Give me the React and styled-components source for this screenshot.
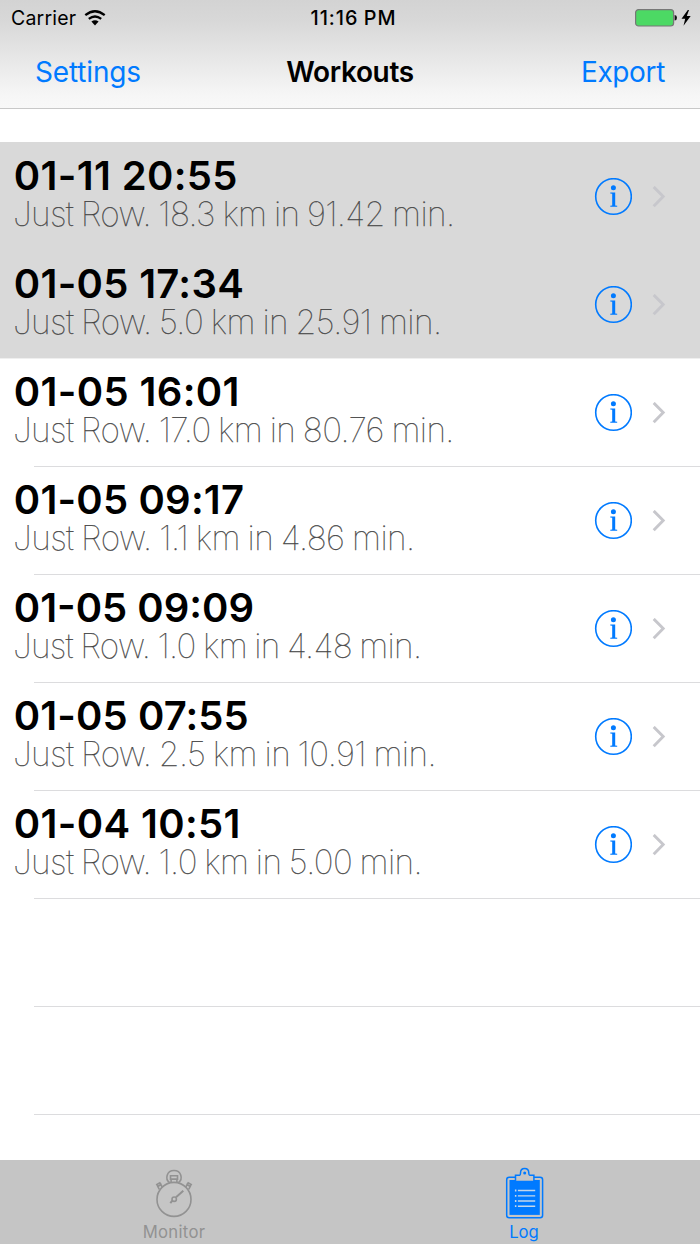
import React from "react";
import styled, { createGlobalStyle } from "styled-components";

const GlobalStyle = createGlobalStyle`
  * { box-sizing: border-box; }
  body { margin: 0; background: #fff; font-family: Inter, "Liberation Sans", sans-serif; color: #000; }
  svg { flex: none; }
`;

const Screen = styled.div`
  width: 700px;
  height: 1244px;
  display: flex;
  flex-direction: column;
  overflow: hidden;
`;

const Header = styled.header`
  height: 109px;
  flex: none;
  background: linear-gradient(#d3d3d3 0%, #d8d8d8 20%, #f6f6f6 88%, #f8f8f8 100%);
  border-bottom: 1px solid #c8c8c8;
`;

const StatusBar = styled.div`
  height: 36px;
  padding: 0 9px 0 11px;
  display: grid;
  grid-template-columns: 1fr auto 1fr;
  align-items: center;
  font-size: 19.5px;
  line-height: 36px;
`;

const StatusGroup = styled.div`
  display: flex;
  align-items: center;
  justify-content: ${(p) => (p.$end ? "flex-end" : "flex-start")};
  gap: ${(p) => (p.$end ? 4 : 8)}px;
  letter-spacing: 0.2px;
`;

const Clock = styled.time`
  font-weight: 500;
  font-size: 19.8px;
  letter-spacing: 1px;
  word-spacing: -1px;
  padding-left: 5px;
`;

const NavBar = styled.nav`
  height: 72px;
  padding: 0 35px;
  display: grid;
  grid-template-columns: 1fr auto 1fr;
  line-height: 72px;
  font-size: 28px;
`;

const NavAction = styled.a`
  color: #007aff;
  letter-spacing: ${(p) => p.$spacing}px;
  text-align: ${(p) => p.$align};
`;

const NavTitle = styled.h1`
  margin: 0;
  font-size: 28px;
  font-weight: 600;
  letter-spacing: -0.35px;
`;

const List = styled.ul`
  list-style: none;
  flex: 1;
  min-height: 0;
  overflow: hidden;
  margin: 0;
  padding: 33px 0 0;
`;

const Row = styled.li`
  height: 108.06px;
  display: flex;
  background: ${(p) => (p.$selected ? "#d9d9d9" : "#fff")};
  padding-left: ${(p) => (p.$inset ? 34 : 0)}px;
`;

const RowBody = styled.div`
  flex: 1;
  display: flex;
  align-items: center;
  padding-right: 34px;
  border-top: 1px solid ${(p) => (p.$selected ? "transparent" : p.$soft ? "#efefef" : "#dcdcde")};
`;

const RowText = styled.div`
  flex: 1;
  white-space: nowrap;
  align-self: flex-start;
  padding-top: 11px;
  margin-left: ${(p) => (p.$inset ? -21 : 13)}px;
`;

const RowTitle = styled.div`
  padding-left: 0.8px;
  font-size: 40px;
  font-weight: 600;
  line-height: 44px;
  letter-spacing: ${(p) => p.$spacing}px;
`;

const RowDetail = styled.div`
  font-size: 33.5px;
  font-weight: 100;
  line-height: 32px;
  color: #444;
  -webkit-text-stroke: 0.25px #444;
  letter-spacing: ${(p) => p.$spacing}px;
  word-spacing: -1.3px;
`;

const InfoIcon = styled.svg`
  width: 38px;
  height: 38px;
  margin-right: 20px;
`;

const TabBar = styled.footer`
  height: 84px;
  flex: none;
  display: flex;
  background: #c5c5c5;
`;

const Tab = styled.div`
  flex: 1;
  display: flex;
  flex-direction: column;
  align-items: center;
  padding: 7px 2px 0 0;
  color: ${(p) => (p.$active ? "#007aff" : "#929292")};
  font-size: 16.7px;
  line-height: 25px;
  letter-spacing: ${(p) => (p.$active ? 0 : 0.3)}px;
`;

const Wifi = () => (
  <svg width="22" height="16" viewBox="0 0 22 16" fill="none" stroke="#000" strokeWidth="2.3">
    <path d="M1.3 5.2Q11 -2.7 20.7 5.2M4.8 8.9Q11 4.1 17.2 8.9" />
    <path d="M7.4 11.5Q11 8.9 14.6 11.5L11 15.5Z" fill="#000" stroke="none" />
  </svg>
);

const Battery = () => (
  <svg width="42" height="18" viewBox="0 0 42 18">
    <rect x="0.6" y="0.6" width="38" height="16.4" rx="3" fill="#4cd964" stroke="#777" strokeWidth="1.2" />
    <path d="M39.6 6Q42 6.2 42 8.8T39.6 11.6Z" fill="#111" />
  </svg>
);

const Bolt = () => (
  <svg width="10" height="16" viewBox="0 0 10 16">
    <path d="M6.8 0L0.5 8.7H4.2L2.5 15.7L9.7 6.1H5.8L8 0Z" />
  </svg>
);

const Info = () => (
  <InfoIcon viewBox="0 0 38 38" fill="#007aff">
    <circle cx="19.5" cy="18.5" r="17.8" fill="none" stroke="#007aff" strokeWidth="1.6" />
    <circle cx="19.4" cy="9.8" r="2.5" />
    <path d="M16.3 14.5H21.2V27.4L23.2 27.8V28.8H16.3V27.8L18.2 27.4V15.8L16.3 15.5Z" />
  </InfoIcon>
);

const Chevron = () => (
  <svg width="14" height="22" viewBox="0 0 14 22" fill="none" stroke="#c7c7cc" strokeWidth="2.9">
    <path d="M1.7 0.9L11.2 10.6L1.7 20.3" />
  </svg>
);

const Stopwatch = () => (
  <svg width="40" height="53" viewBox="0 0 40 53" fill="none" stroke="currentColor" strokeWidth="1.6">
    <circle cx="20" cy="32.4" r="17" />
    <path d="M15.4 15.3C10.8 12 12.6 3.5 20 3.5S29.2 12 24.6 15.3M17.1 15V12.2H22.9V15" />
    <path d="M16.5 8.7H23.5V12.2H16.5Z" />
    <path d="M8.2 20L6.8 17.5L3.8 19.6L5.3 22.4M4.1 19.5L2.8 17.5L5.8 15.7L7.1 17.5M31.8 20L33.2 17.5L36.2 19.6L34.7 22.4M35.9 19.5L37.2 17.5L34.2 15.7L32.9 17.5" />
    <path d="M22 30.2L29.3 23.7M18.4 33.6L16.3 36.2" strokeWidth="2" />
    <circle cx="20.2" cy="32.2" r="2.2" />
  </svg>
);

const Clipboard = () => (
  <svg width="40" height="53" viewBox="0 0 40 53" fill="none" stroke="#007aff" strokeWidth="1.5">
    <rect x="2.7" y="10.3" width="35.9" height="40.4" rx="2.5" />
    <rect x="5.5" y="13" width="30.3" height="34.9" fill="#007aff" stroke="none" />
    <path d="M11.5 14.4V8.3H15.7Q16.5 8.2 16.5 6C16.5 .1 24.8 .1 24.8 6Q24.8 8.2 25.7 8.3H29.9V14.4Z" fill="#c5c5c5" />
    <circle cx="20.7" cy="5.9" r="1.5" fill="#007aff" stroke="none" />
    <path d="M13.9 23.5H31.2M13.9 28.9H31.2M13.9 34H31.2M13.9 39.2H31.2" stroke="#c5d7ea" strokeWidth="1.4" />
    <path d="M10.9 23.5H12.4M10.9 28.9H12.4M10.9 34H12.4M10.9 39.2H12.4" stroke="#c5d7ea" strokeWidth="1.8" />
  </svg>
);

const workouts = [
  { title: "01-11 20:55", detail: "Just Row. 18.3 km in 91.42 min.", selected: true, ts: 0.35, ds: -0.65 },
  { title: "01-05 17:34", detail: "Just Row. 5.0 km in 25.91 min.", selected: true, ts: 0.3, ds: -0.59 },
  { title: "01-05 16:01", detail: "Just Row. 17.0 km in 80.76 min.", ts: 0.35, ds: -0.62 },
  { title: "01-05 09:17", detail: "Just Row. 1.1 km in 4.86 min.", ts: 0.2, ds: -0.57 },
  { title: "01-05 09:09", detail: "Just Row. 1.0 km in 4.48 min.", ts: 0, ds: -0.73 },
  { title: "01-05 07:55", detail: "Just Row. 2.5 km in 10.91 min.", ts: 0.1, ds: -0.6 },
  { title: "01-04 10:51", detail: "Just Row. 1.0 km in 5.00 min.", ts: 0.35, ds: -0.64 },
];

function WorkoutRow({ workout, inset, soft }) {
  return (
    <Row $selected={workout.selected} $inset={inset}>
      <RowBody $selected={workout.selected} $soft={soft}>
        <RowText $inset={inset}>
          <RowTitle $spacing={workout.ts}>{workout.title}</RowTitle>
          <RowDetail $spacing={workout.ds}>{workout.detail}</RowDetail>
        </RowText>
        <Info />
        <Chevron />
      </RowBody>
    </Row>
  );
}

export default function App() {
  return (
    <Screen>
      <GlobalStyle />
      <Header>
        <StatusBar>
          <StatusGroup>Carrier<Wifi /></StatusGroup>
          <Clock>11:16 PM</Clock>
          <StatusGroup $end><Battery /><Bolt /></StatusGroup>
        </StatusBar>
        <NavBar>
          <NavAction $spacing={-0.15}>Settings</NavAction>
          <NavTitle>Workouts</NavTitle>
          <NavAction $align="right" $spacing={-0.35}>Export</NavAction>
        </NavBar>
      </Header>
      <List>
        {workouts.map((w, i) => (
          <WorkoutRow key={w.title} workout={w} inset={i > 2} soft={i === 2} />
        ))}
        <Row $inset><RowBody /></Row>
        <Row $inset><RowBody /></Row>
        <Row $inset><RowBody /></Row>
      </List>
      <TabBar>
        <Tab><Stopwatch />Monitor</Tab>
        <Tab $active><Clipboard />Log</Tab>
      </TabBar>
    </Screen>
  );
}
